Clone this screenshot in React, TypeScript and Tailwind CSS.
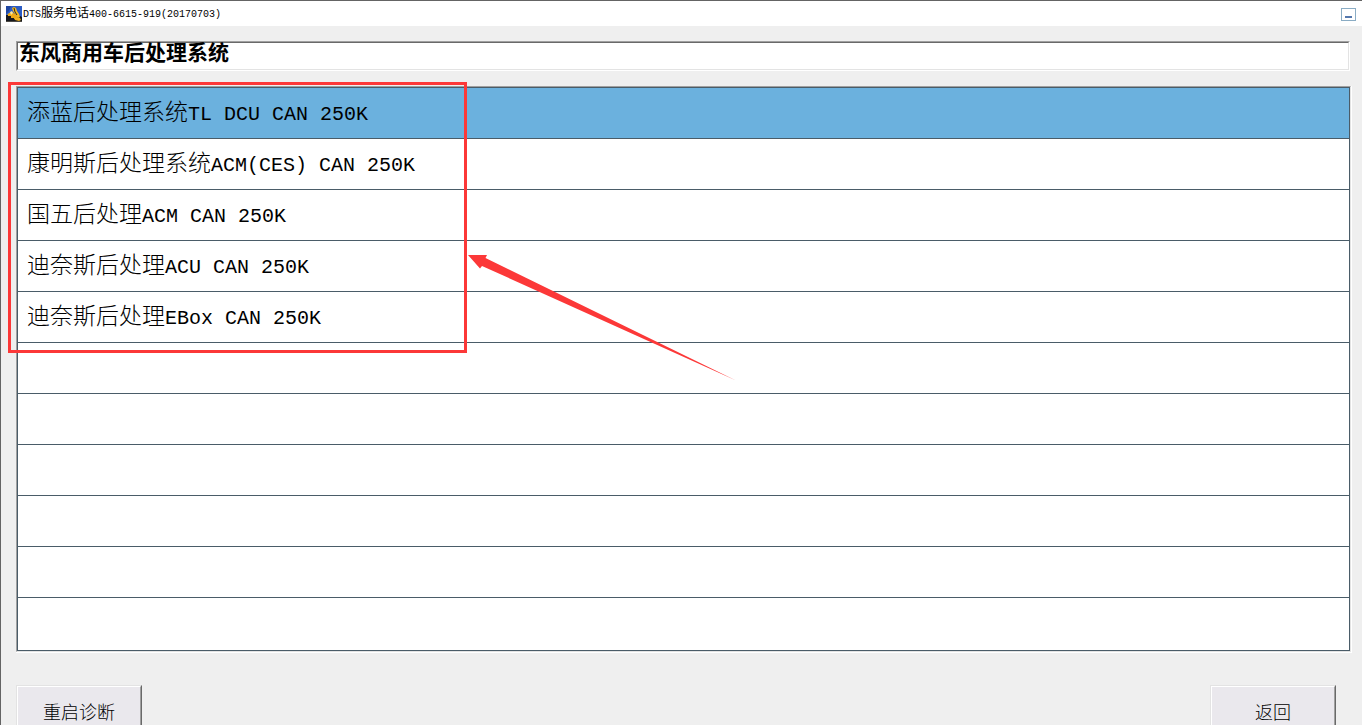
import React, { useState } from 'react';

type System = {
  name: string;
  code: string;
};

const systems: System[] = [
  { name: '添蓝后处理系统', code: 'TL DCU CAN 250K' },
  { name: '康明斯后处理系统', code: 'ACM(CES) CAN 250K' },
  { name: '国五后处理', code: 'ACM CAN 250K' },
  { name: '迪奈斯后处理', code: 'ACU CAN 250K' },
  { name: '迪奈斯后处理', code: 'EBox CAN 250K' },
];

const ROW_COUNT = 11;

const AppIcon = () => (
  <svg className="size-4 shrink-0" viewBox="0 0 16 16" aria-hidden="true">
    <rect width="16" height="16" fill="#2b5cc4" />
    <path d="M0 0h5l-2 5-3 3z" fill="#1f459f" />
    <path d="M0 11l2-1h12l2 1v5H0z" fill="#15171c" />
    <path d="M6 2l2-1 2 1 1 3 2 3 1 3-2 1-3-4-2-3z" fill="#f5b81e" />
    <path d="M8 2l1 4 2 3" stroke="#2a2410" strokeWidth="1" fill="none" />
    <path d="M1 9l2-2 3-1 3 2 2 2v2l-4 1H3l-2-1z" fill="#eda916" />
    <path d="M4 6l2-1 1 2-2 2z" fill="#fbe79a" />
    <path d="M0 9h2v1h3v2h3v2H0z" fill="#17181c" />
    <path d="M8 12l3-1 3 1 1 2-2 1-4-1z" fill="#f0b01c" />
    <path d="M0 15h16v1H0z" fill="#4d4a45" />
  </svg>
);

const TitleBar = () => (
  <header className="flex h-[25px] shrink-0 items-center justify-between bg-white pl-[5px] pr-[6px] pt-px">
    <div className="flex items-center gap-px">
      <AppIcon />
      <h1 className="whitespace-nowrap pt-px text-[12px] leading-4">
        <span className="text-[10px]">DTS</span>服务电话<span className="text-[10px]">400-6615-919(20170703)</span>
      </h1>
    </div>
    <button aria-label="最小化" className="flex h-[13px] w-[15px] items-end justify-center border border-[#8aacc4] bg-white pb-[2px]">
      <span className="h-[2px] w-[7px] bg-[#5578ad]" />
    </button>
  </header>
);

const ClassicButton = ({ children }: { children: React.ReactNode }) => (
  <button className="w-[126px] border border-b-[#696969] border-l-[#e3e3e3] border-r-[#696969] border-t-[#e3e3e3]">
    <span className="flex h-14 items-center justify-center border border-b-[#a0a0a0] border-l-white border-r-[#a0a0a0] border-t-white bg-[#eae8ed] text-[18px] font-light leading-6">
      {children}
    </span>
  </button>
);

// Red frame around the listed systems, with an arrow pointing at it
const Highlight = () => (
  <>
    <div className="pointer-events-none absolute -left-2 -top-1 h-[271px] w-[459px] border-3 border-[#fc3838]" />
    <svg className="pointer-events-none absolute left-[452px] top-[169px] h-[126px] w-[268px]" viewBox="0 0 268 126" aria-hidden="true">
      <path d="M0 0H19L17.500 3L268 125.500L14 11L12 13.500Z" fill="#fc3838" />
    </svg>
  </>
);

export default function App() {
  const [selected, setSelected] = useState(0);

  return (
    <div className="flex h-screen flex-col overflow-hidden border-l border-t border-[#646464] bg-[#efefef] font-['Liberation_Mono','Noto_Sans_CJK_SC',monospace] text-black">
      <TitleBar />

      <main className="flex flex-col pl-[15px] pr-[10px] pt-[15px]">
        <div className="mr-[2px] border border-b-white border-l-[#a0a0a0] border-r-white border-t-[#a0a0a0]">
          <h2 className="h-7 border border-b-[#e3e3e3] border-l-[#696969] border-r-[#e3e3e3] border-t-[#696969] bg-white pl-px text-[21px] font-bold leading-6">
            东风商用车后处理系统
          </h2>
        </div>

        <div className="relative mt-[15px]">
          <div className="border-b border-r border-white">
            <div className="border border-b-[#e3e3e3] border-l-[#a0a0a0] border-r-[#e3e3e3] border-t-[#a0a0a0]">
              <ul className="border border-[#4a5c68] bg-white">
                {Array.from({ length: ROW_COUNT }, (_, index) => {
                  const system = systems[index];
                  return (
                    <li key={index} className="h-[51px] border-b border-[#4a5c68] last:h-[52px] last:border-b-0">
                      {system && (
                        <button
                          onClick={() => setSelected(index)}
                          className={`block h-full w-full whitespace-pre pl-[9px] pt-[3px] text-left text-[23px] font-light leading-8 ${index === selected ? 'bg-[#6bb1de]' : 'bg-white'}`}
                        >
                          {system.name}
                          <span className="text-[20px] font-normal">{system.code}</span>
                        </button>
                      )}
                    </li>
                  );
                })}
              </ul>
            </div>
          </div>
          <Highlight />
        </div>

        <footer className="mt-8 flex justify-between pr-4">
          <ClassicButton>重启诊断</ClassicButton>
          <ClassicButton>返回</ClassicButton>
        </footer>
      </main>
    </div>
  );
}
